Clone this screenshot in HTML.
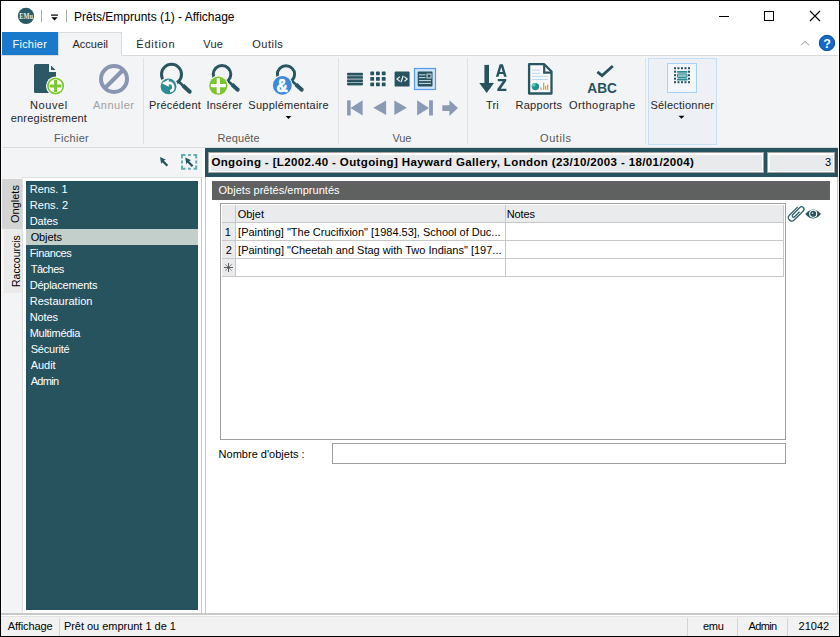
<!DOCTYPE html>
<html><head><meta charset="utf-8"><style>
html,body{margin:0;padding:0;}
body{width:840px;height:637px;position:relative;overflow:hidden;background:#fff;font-family:"Liberation Sans", sans-serif;}
.a{position:absolute;box-sizing:border-box;}
.t{position:absolute;white-space:pre;transform-origin:0 0;}
svg{position:absolute;overflow:visible;}
</style></head><body>
<!-- frame -->
<div class="a" style="left:0;top:0;width:840px;height:637px;border:1px solid #000;"></div>
<!-- title bar -->
<svg style="left:0;top:0" width="840" height="32">
 <circle cx="26" cy="15.9" r="8.1" fill="#2a5a66"/>
 <text x="19.3" y="18.5" font-family="Liberation Serif" font-size="7.2" font-weight="700" fill="#e8eeef" textLength="13.6" lengthAdjust="spacingAndGlyphs">EMu</text>
 <rect x="41" y="10" width="1" height="12" fill="#a8a8a8"/>
 <rect x="51" y="14.5" width="7" height="1.2" fill="#000"/>
 <path d="M51.3 17.2 L57.7 17.2 L54.5 20.6 Z" fill="#000"/>
 <rect x="66" y="10" width="1" height="12" fill="#a8a8a8"/>
 <rect x="719" y="16" width="10" height="1" fill="#000"/>
 <rect x="764.5" y="11.5" width="9" height="9" fill="none" stroke="#000" stroke-width="1"/>
 <path d="M810 11 L820 21 M820 11 L810 21" stroke="#000" stroke-width="1.1"/>
</svg>
<!-- tabs row -->
<div class="a" style="left:1px;top:55px;width:838px;height:1px;background:#dadbdc;"></div>
<div class="a" style="left:2px;top:32px;width:56px;height:23px;background:#1979ca;"></div>
<div class="a" style="left:58px;top:32px;width:64px;height:24px;background:#f3f4f6;border:1px solid #dadbdc;border-bottom:none;"></div>
<svg style="left:0;top:32px" width="840" height="24">
 <path d="M801 13.3 L805 9.3 L809 13.3" stroke="#8c8c8c" stroke-width="1" fill="none"/>
 <circle cx="827" cy="11" r="7.7" fill="#1469c9" stroke="#0b4f9e" stroke-width="1"/>
 <text x="827" y="15.6" font-family="Liberation Sans" font-size="12.5" font-weight="700" fill="#fff" text-anchor="middle">?</text>
</svg>
<!-- ribbon body -->
<div class="a" style="left:1px;top:56px;width:838px;height:91px;background:#f3f4f6;"></div>
<div class="a" style="left:1px;top:147px;width:838px;height:1px;background:#dadbdc;"></div>
<div class="a" style="left:143px;top:58px;width:1px;height:86px;background:#e1e2e4;"></div>
<div class="a" style="left:338px;top:58px;width:1px;height:86px;background:#e1e2e4;"></div>
<div class="a" style="left:467px;top:58px;width:1px;height:86px;background:#e1e2e4;"></div>
<div class="a" style="left:645px;top:58px;width:1px;height:86px;background:#e1e2e4;"></div>
<div class="a" style="left:648px;top:58px;width:69px;height:87px;background:#edf1f6;border:1px solid #c6dff5;"></div>
<div class="a" style="left:667px;top:63px;width:30px;height:30px;background:#f3f6fa;border:1px solid #a9d1f3;"></div>
<!-- left panel -->
<div class="a" style="left:1px;top:148px;width:201px;height:465px;background:#f3f4f6;"></div>
<div class="a" style="left:202px;top:148px;width:3px;height:465px;background:#fff;"></div>
<div class="a" style="left:2px;top:179px;width:20px;height:50px;background:#d4d4d4;"></div>
<div class="a" style="left:4px;top:229px;width:18px;height:64px;background:#ebebeb;"></div>
<div class="a" style="left:22px;top:177px;width:180px;height:437px;background:#fff;border:1px solid #e0e0e0;border-right-color:#c8c8c8;"></div>
<div class="a" style="left:26px;top:181px;width:172px;height:429px;background:#27535f;"></div>
<div class="a" style="left:26px;top:229px;width:172px;height:16px;background:#c3cfcb;"></div>
<div class="a" style="left:1px;top:56px;width:1px;height:557px;background:#fbfbfb;"></div>
<div class="a" style="left:838px;top:55px;width:1px;height:558px;background:#fbfbfb;"></div>
<!-- content -->
<div class="a" style="left:205px;top:177px;width:1px;height:437px;background:#c8c8c8;"></div>
<div class="a" style="left:837px;top:148px;width:1px;height:466px;background:#c8c8c8;"></div>
<div class="a" style="left:205px;top:148px;width:633px;height:29px;background:#27535f;"></div>
<div class="a" style="left:208px;top:152px;width:556px;height:21px;background:#e9eaeb;border:1px solid #a8a2a2;box-shadow:inset 2px 2px 0 #fff, inset -1px -1px 0 #fff;"></div>
<div class="a" style="left:767px;top:152px;width:68px;height:21px;background:#e9eaeb;border:1px solid #a8a2a2;box-shadow:inset 2px 2px 0 #fff, inset -1px -1px 0 #fff;"></div>
<div class="a" style="left:212px;top:181px;width:618px;height:19px;background:#5f6160;"></div>
<!-- grid -->
<div class="a" style="left:220px;top:203px;width:566px;height:237px;background:#fff;border:1px solid #a0a0a0;"></div>
<div class="a" style="left:222px;top:205px;width:561px;height:17px;background:#eaebec;"></div>
<div class="a" style="left:222px;top:222px;width:13px;height:54px;background:#eaebec;"></div>
<div class="a" style="left:222px;top:222px;width:562px;height:1px;background:#c8c8c8;"></div>
<div class="a" style="left:222px;top:240px;width:562px;height:1px;background:#c8c8c8;"></div>
<div class="a" style="left:222px;top:258px;width:562px;height:1px;background:#c8c8c8;"></div>
<div class="a" style="left:222px;top:276px;width:562px;height:1px;background:#c8c8c8;"></div>
<div class="a" style="left:235px;top:205px;width:1px;height:72px;background:#c8c8c8;"></div>
<div class="a" style="left:505px;top:205px;width:1px;height:72px;background:#c8c8c8;"></div>
<div class="a" style="left:783px;top:205px;width:1px;height:72px;background:#c8c8c8;"></div>
<svg style="left:221px;top:258px" width="14" height="18">
 <path d="M4.3 6.3 L10.7 12.7 M10.7 6.3 L4.3 12.7" stroke="#7a7a7a" stroke-width="0.9"/><path d="M7.5 5 V14 M3 9.5 H12" stroke="#5a5a5a" stroke-width="1"/>
</svg>
<div class="a" style="left:332px;top:443px;width:454px;height:21px;background:#fff;border:1px solid #a0a0a0;"></div>
<!-- status bar -->
<div class="a" style="left:1px;top:613px;width:838px;height:2px;background:#c8c8c8;"></div>
<div class="a" style="left:1px;top:616px;width:838px;height:20px;background:#f2f2f2;border-top:1px solid #e3e3e3;"></div>
<div class="a" style="left:59px;top:618px;width:1px;height:18px;background:#d5d5d5;"></div>
<div class="a" style="left:687px;top:618px;width:1px;height:18px;background:#d5d5d5;"></div>
<div class="a" style="left:737px;top:618px;width:1px;height:18px;background:#d5d5d5;"></div>
<div class="a" style="left:787px;top:618px;width:1px;height:18px;background:#d5d5d5;"></div>
<div class="a" style="left:0;top:636px;width:840px;height:1px;background:#000;"></div>
<!-- ribbon icons -->
<svg style="left:0;top:0" width="840" height="148">
 <!-- Nouvel enregistrement -->
 <path d="M35.5 64 H49 V72 H56 V91.5 Q56 93 54.5 93 H35.5 Q34 93 34 91.5 V65.5 Q34 64 35.5 64 Z" fill="#2b5864"/>
 <path d="M51 65.5 L51 70 L55.5 70 Z" fill="#2b5864"/>
 <circle cx="55.6" cy="86" r="9.6" fill="#fff"/>
 <circle cx="55.6" cy="86" r="7.7" fill="#fff" stroke="#7dc832" stroke-width="1.7"/>
 <path d="M49.6 86 H61.6 M55.6 80 V92" stroke="#7dc832" stroke-width="3"/>
 <!-- Annuler -->
 <circle cx="114" cy="79" r="13" fill="none" stroke="#8896b3" stroke-width="4"/>
 <path d="M123.5 69.5 L104.5 88.5" stroke="#8896b3" stroke-width="4"/>
 <!-- Precedent -->
 <circle cx="171.5" cy="74.3" r="10" fill="none" stroke="#2a5560" stroke-width="3"/>
 <path d="M178 81 L191 93" stroke="#2a5560" stroke-width="2.6"/>
 <path d="M183 85.5 L190.5 92.5" stroke="#2a5560" stroke-width="4"/>
 <circle cx="168.5" cy="86.4" r="9.3" fill="#f3f4f6"/>
 <circle cx="168.5" cy="86.4" r="7.9" fill="#2b8c95"/>
 <path d="M161.8 83.2 L168.7 79.4 L168.8 81.6 A5.6 5.6 0 0 1 170.4 92.6 L169.7 89.9 A2.7 2.7 0 0 0 168.8 84.4 L168.8 86.8 Z" fill="#fff"/>
 <!-- Inserer -->
 <circle cx="222" cy="74.3" r="8.8" fill="none" stroke="#2a5560" stroke-width="3"/>
 <path d="M227.5 80.5 L239 91" stroke="#2a5560" stroke-width="2.6"/>
 <path d="M232 84.5 L238.5 90.5" stroke="#2a5560" stroke-width="4"/>
 <circle cx="218.3" cy="85.7" r="10.2" fill="#f3f4f6"/>
 <circle cx="218.3" cy="85.7" r="9.1" fill="#7dc530"/>
 <path d="M210.8 85.7 H225.8 M218.3 78.2 V93.2" stroke="#fff" stroke-width="3.2"/>
 <!-- Supplementaire -->
 <circle cx="286" cy="74.3" r="8.6" fill="none" stroke="#2a5560" stroke-width="3"/>
 <path d="M291.5 80.5 L303 91" stroke="#2a5560" stroke-width="2.6"/>
 <path d="M296 84.5 L302.5 90.5" stroke="#2a5560" stroke-width="4"/>
 <circle cx="282.3" cy="85.4" r="10.5" fill="#f3f4f6"/>
 <circle cx="282.3" cy="85.4" r="9.4" fill="#3d88db"/>
 <text x="276.6" y="91.6" font-family="Liberation Sans" font-size="18" font-weight="700" fill="#fff" stroke="#fff" stroke-width="0.7" textLength="11.2" lengthAdjust="spacingAndGlyphs">&amp;</text>
 <!-- Vue: list -->
 <rect x="347" y="72.5" width="16" height="13" rx="1" fill="#9fb0b5"/>
 <rect x="347" y="73" width="16" height="2.2" rx="1" fill="#27535f"/>
 <rect x="347" y="76.3" width="16" height="2.2" rx="1" fill="#27535f"/>
 <rect x="347" y="79.8" width="16" height="2.2" rx="1" fill="#27535f"/>
 <rect x="347" y="83" width="16" height="2.2" rx="1" fill="#27535f"/>
 <!-- grid -->
 <g fill="#27535f">
  <rect x="370.3" y="71.4" width="3.8" height="3.8" rx="0.6"/><rect x="376" y="71.4" width="3.8" height="3.8" rx="0.6"/><rect x="381.8" y="71.4" width="3.8" height="3.8" rx="0.6"/>
  <rect x="370.3" y="77" width="3.8" height="3.8" rx="0.6"/><rect x="376" y="77" width="3.8" height="3.8" rx="0.6"/><rect x="381.8" y="77" width="3.8" height="3.8" rx="0.6"/>
  <rect x="370.3" y="82.5" width="3.8" height="3.8" rx="0.6"/><rect x="376" y="82.5" width="3.8" height="3.8" rx="0.6"/><rect x="381.8" y="82.5" width="3.8" height="3.8" rx="0.6"/>
 </g>
 <!-- code -->
 <rect x="394.6" y="71.4" width="15" height="15.2" rx="1.2" fill="#27535f"/>
 <path d="M399.8 76.6 L397 79 L399.8 81.4 M404.4 76.6 L407.2 79 L404.4 81.4 M403.2 75.8 L401 82.2" stroke="#f0f4f5" stroke-width="1.2" fill="none"/>
 <!-- selected form -->
 <rect x="414.5" y="68.5" width="21" height="21" fill="#cde4f9" stroke="#5a9de6" stroke-width="1.2"/>
 <rect x="417.7" y="71.6" width="14.8" height="14.9" rx="1" fill="#27535f"/>
 <path d="M419 74.8 H425.5 M419 77.6 H425.5 M419 80.6 H431 M419 83.4 H431" stroke="#cfe0ea" stroke-width="1"/>
 <rect x="427" y="74" width="4" height="4" fill="none" stroke="#cfe0ea" stroke-width="1"/>
 <!-- nav -->
 <g fill="#8a9ab5">
  <rect x="347.1" y="100.3" width="3.6" height="15.2"/>
  <path d="M350.5 107.9 L362.6 100.3 V115.5 Z"/>
  <path d="M373.3 107.8 L386.1 100.6 V115 Z"/>
  <path d="M407 107.8 L394.3 100.6 V115 Z"/>
  <path d="M429 107.9 L417.1 100.3 V115.5 Z"/>
  <rect x="429.1" y="100.3" width="3.8" height="15.2"/>
  <path d="M442.3 105.3 H449.4 V100.3 L458 108 L449.4 116 V111 H442.3 Z"/>
 </g>
 <!-- Tri -->
 <rect x="484.4" y="64.9" width="4.6" height="19" fill="#27535f"/>
 <path d="M479.3 83 H494 L486.7 93 Z" fill="#27535f"/>
  <path d="M495.9 76.8 L499.7 64.3 H502.9 L506.7 76.8 H504.1 L503.3 74.1 H499.3 L498.5 76.8 Z M499.9 71.9 H502.7 L501.3 66.9 Z" fill="#27535f" fill-rule="evenodd"/>
 <path d="M497.8 79 H506.2 V81.1 L500.7 88.8 H506.4 V91 H497.3 V88.9 L502.8 81.2 H497.8 Z" fill="#27535f"/>
 <!-- Rapports -->
 <path d="M529.1 64.2 H544.2 L551.5 71.5 V93.5 H529.1 Z" fill="#f6f8fa" stroke="#2a5560" stroke-width="2.3" stroke-linejoin="round"/>
 <path d="M544.2 64.2 V72.7 H551.5" fill="none" stroke="#2a5560" stroke-width="2.2"/>
 <path d="M532 70.2 H540 M532 73.3 H540 M532 76.4 H548 M532 79.5 H548" stroke="#b9d9f2" stroke-width="1"/>
 <circle cx="535.4" cy="86.6" r="3.7" fill="#2b8c94"/>
 <path d="M535.4 86.6 V82.9 A3.7 3.7 0 0 0 531.7 86.6 Z" fill="#45d6b0"/>
 <g fill="#e8a030"><rect x="540.5" y="87.5" width="1.3" height="2.3"/><rect x="543" y="82.7" width="1.3" height="7.1"/><rect x="545" y="86" width="1.3" height="3.8"/><rect x="547" y="84.5" width="1.3" height="5.3"/></g>
 <!-- Orthographe -->
 <path d="M597.4 71.8 L602.1 75.6 L612.8 66" fill="none" stroke="#27535f" stroke-width="2.8"/>
 <text x="602.1" y="92.5" font-family="Liberation Sans" font-size="14" font-weight="700" fill="#27535f" text-anchor="middle" textLength="29.6" lengthAdjust="spacingAndGlyphs">ABC</text>
 <!-- Selectionner -->
 <g fill="#2a5560">
  <rect x="674" y="67.2" width="2" height="2"/><rect x="677.5" y="67.2" width="2" height="2"/><rect x="681" y="67.2" width="2" height="2"/><rect x="684.5" y="67.2" width="2" height="2"/><rect x="688" y="67.2" width="2" height="2"/>
  <rect x="674" y="81.2" width="2" height="2"/><rect x="677.5" y="81.2" width="2" height="2"/><rect x="681" y="81.2" width="2" height="2"/><rect x="684.5" y="81.2" width="2" height="2"/><rect x="688" y="81.2" width="2" height="2"/>
  <rect x="674" y="70.7" width="2" height="2"/><rect x="674" y="74.2" width="2" height="2"/><rect x="674" y="77.7" width="2" height="2"/>
  <rect x="688" y="70.7" width="2" height="2"/><rect x="688" y="74.2" width="2" height="2"/><rect x="688" y="77.7" width="2" height="2"/>
 </g>
 <rect x="677" y="71" width="10.5" height="1.8" rx="0.6" fill="#2b8c94"/>
 <rect x="677.5" y="73.9" width="9.5" height="3.6" rx="0.6" fill="#8ec3c4" stroke="#2b8c94" stroke-width="1"/>
 <rect x="677" y="78.6" width="10.5" height="1.8" rx="0.6" fill="#2b8c94"/>
 <!-- dropdown arrows -->
 <path d="M285.6 116 H291.4 L288.5 119 Z" fill="#000"/>
 <path d="M678.5 115.7 H684.5 L681.5 118.7 Z" fill="#000"/>
</svg>
<!-- left panel icons -->
<svg style="left:0;top:148px" width="210" height="30">
 <path d="M160 9 L166 11.8 L163.8 12.6 L168.2 17 L166.6 18.6 L162.2 14.2 L161.2 16 Z" fill="#27535f"/>
 <path d="M182 10.5 V7.1 H185.5 M188 7.1 H190.8 M193.5 7.1 H196.2 V10.5 M196.2 12.5 V15.5 M196.2 17.5 V20.7 H193.5 M190.8 20.7 H188 M185.5 20.7 H182 V17.5 M182 15.5 V12.5" fill="none" stroke="#62adae" stroke-width="2"/>
 <path d="M185.2 9.4 L191.2 12.2 L189 13 L193.4 17.4 L191.8 19 L187.4 14.6 L186.4 16.4 Z" fill="#27535f"/>
</svg>
<!-- paperclip & eye -->
<svg style="left:784px;top:202px" width="42" height="24">
 <path transform="translate(7.8 15.6) rotate(45)" d="M-3.4 -11.8 L-3.4 0 A3.4 3.4 0 0 0 3.4 0 L3.4 -12.8 A2.4 2.4 0 0 0 -1.4 -12.8 L-1.4 -2.6 A1.4 1.4 0 0 0 1.4 -2.6 L1.4 -9.6" fill="none" stroke="#2a5f6a" stroke-width="1.25" stroke-linecap="butt"/>
 <path d="M21.3 12 Q29 3 37 12 Q29 21 21.3 12 Z" fill="#2a5560"/>
 <circle cx="29.2" cy="11.8" r="3.5" fill="none" stroke="#fff" stroke-width="1.1"/>
 <circle cx="29.2" cy="11.8" r="2.6" fill="#2a5560"/>
 <path d="M29.2 11.8 V10.2 A1.6 1.6 0 0 0 27.6 11.8 Z" fill="#fff"/>
</svg>
<!-- vertical tabs text -->
<span class="t" style="left:10.3px;top:223px;font-size:11px;line-height:11px;color:#000;transform:rotate(-90deg);">Onglets</span>
<span class="t" style="left:10.9px;top:287px;font-size:11px;line-height:11px;color:#000;transform:rotate(-90deg) scaleX(0.952);">Raccourcis</span>

<span id="t0" class="t" style="left:74.00px;top:10.84px;font-size:12px;line-height:12px;font-weight:400;color:#000;letter-spacing:0.000px;">Prêts/Emprunts (1) - Affichage</span>
<span id="t1" class="t" style="left:12.60px;top:38.69px;font-size:11px;line-height:11px;font-weight:400;color:#fff;letter-spacing:0.200px;">Fichier</span>
<span id="t2" class="t" style="left:72.40px;top:38.69px;font-size:11px;line-height:11px;font-weight:400;color:#262626;letter-spacing:0.033px;">Accueil</span>
<span id="t3" class="t" style="left:136.30px;top:38.69px;font-size:11px;line-height:11px;font-weight:400;color:#262626;letter-spacing:0.783px;">Édition</span>
<span id="t4" class="t" style="left:203.30px;top:38.69px;font-size:11px;line-height:11px;font-weight:400;color:#262626;letter-spacing:0.200px;">Vue</span>
<span id="t5" class="t" style="left:252.30px;top:38.69px;font-size:11px;line-height:11px;font-weight:400;color:#262626;letter-spacing:0.480px;">Outils</span>
<span id="t6" class="t" style="left:30.00px;top:99.69px;font-size:11px;line-height:11px;font-weight:400;color:#262626;letter-spacing:0.600px;">Nouvel</span>
<span id="t7" class="t" style="left:10.70px;top:112.69px;font-size:11px;line-height:11px;font-weight:400;color:#262626;letter-spacing:0.215px;">enregistrement</span>
<span id="t8" class="t" style="left:93.00px;top:99.69px;font-size:11px;line-height:11px;font-weight:400;color:#a0a0a0;letter-spacing:0.500px;">Annuler</span>
<span id="t9" class="t" style="left:149.00px;top:99.69px;font-size:11px;line-height:11px;font-weight:400;color:#262626;letter-spacing:0.212px;">Précédent</span>
<span id="t10" class="t" style="left:206.40px;top:99.69px;font-size:11px;line-height:11px;font-weight:400;color:#262626;letter-spacing:0.267px;">Insérer</span>
<span id="t11" class="t" style="left:248.30px;top:99.69px;font-size:11px;line-height:11px;font-weight:400;color:#262626;letter-spacing:0.254px;">Supplémentaire</span>
<span id="t12" class="t" style="left:486.00px;top:99.69px;font-size:11px;line-height:11px;font-weight:400;color:#262626;letter-spacing:0.100px;">Tri</span>
<span id="t13" class="t" style="left:515.40px;top:99.69px;font-size:11px;line-height:11px;font-weight:400;color:#262626;letter-spacing:0.300px;">Rapports</span>
<span id="t14" class="t" style="left:569.00px;top:99.69px;font-size:11px;line-height:11px;font-weight:400;color:#262626;letter-spacing:0.430px;">Orthographe</span>
<span id="t15" class="t" style="left:650.40px;top:99.69px;font-size:11px;line-height:11px;font-weight:400;color:#262626;letter-spacing:0.227px;">Sélectionner</span>
<span id="t16" class="t" style="left:54.00px;top:132.69px;font-size:11px;line-height:11px;font-weight:400;color:#595959;letter-spacing:0.292px;">Fichier</span>
<span id="t17" class="t" style="left:217.60px;top:132.69px;font-size:11px;line-height:11px;font-weight:400;color:#595959;letter-spacing:0.067px;">Requête</span>
<span id="t18" class="t" style="left:392.50px;top:132.69px;font-size:11px;line-height:11px;font-weight:400;color:#595959;letter-spacing:-0.100px;">Vue</span>
<span id="t19" class="t" style="left:540.00px;top:132.69px;font-size:11px;line-height:11px;font-weight:400;color:#595959;letter-spacing:0.600px;">Outils</span>
<span id="t20" class="t" style="left:29.70px;top:183.69px;font-size:11px;line-height:11px;font-weight:400;color:#fff;letter-spacing:0.000px;">Rens. 1</span>
<span id="t21" class="t" style="left:29.70px;top:199.69px;font-size:11px;line-height:11px;font-weight:400;color:#fff;letter-spacing:0.067px;">Rens. 2</span>
<span id="t22" class="t" style="left:29.70px;top:215.69px;font-size:11px;line-height:11px;font-weight:400;color:#fff;letter-spacing:-0.100px;">Dates</span>
<span id="t23" class="t" style="left:30.70px;top:231.69px;font-size:11px;line-height:11px;font-weight:400;color:#000;letter-spacing:-0.120px;">Objets</span>
<span id="t24" class="t" style="left:29.70px;top:247.69px;font-size:11px;line-height:11px;font-weight:400;color:#fff;letter-spacing:-0.357px;">Finances</span>
<span id="t25" class="t" style="left:30.70px;top:263.69px;font-size:11px;line-height:11px;font-weight:400;color:#fff;letter-spacing:-0.480px;">Tâches</span>
<span id="t26" class="t" style="left:29.70px;top:279.69px;font-size:11px;line-height:11px;font-weight:400;color:#fff;letter-spacing:-0.236px;">Déplacements</span>
<span id="t27" class="t" style="left:29.70px;top:295.69px;font-size:11px;line-height:11px;font-weight:400;color:#fff;letter-spacing:0.036px;">Restauration</span>
<span id="t28" class="t" style="left:29.70px;top:311.69px;font-size:11px;line-height:11px;font-weight:400;color:#fff;letter-spacing:-0.100px;">Notes</span>
<span id="t29" class="t" style="left:29.70px;top:327.69px;font-size:11px;line-height:11px;font-weight:400;color:#fff;letter-spacing:-0.278px;">Multimédia</span>
<span id="t30" class="t" style="left:30.70px;top:343.69px;font-size:11px;line-height:11px;font-weight:400;color:#fff;letter-spacing:-0.200px;">Sécurité</span>
<span id="t31" class="t" style="left:30.70px;top:359.69px;font-size:11px;line-height:11px;font-weight:400;color:#fff;letter-spacing:-0.025px;">Audit</span>
<span id="t32" class="t" style="left:30.70px;top:375.69px;font-size:11px;line-height:11px;font-weight:400;color:#fff;letter-spacing:-0.675px;">Admin</span>
<span id="t33" class="t" style="left:211.40px;top:157.27px;font-size:11.5px;line-height:11.5px;font-weight:700;color:#000;letter-spacing:0.378px;">Ongoing - [L2002.40 - Outgoing] Hayward Gallery, London (23/10/2003 - 18/01/2004)</span>
<span id="t34" class="t" style="left:825.00px;top:156.69px;font-size:11px;line-height:11px;font-weight:400;color:#000;">3</span>
<span id="t35" class="t" style="left:218.50px;top:184.69px;font-size:11px;line-height:11px;font-weight:400;color:#fff;letter-spacing:0.027px;">Objets prêtés/empruntés</span>
<span id="t36" class="t" style="left:237.70px;top:208.69px;font-size:11px;line-height:11px;font-weight:400;color:#000;letter-spacing:0.000px;">Objet</span>
<span id="t37" class="t" style="left:506.70px;top:208.69px;font-size:11px;line-height:11px;font-weight:400;color:#000;letter-spacing:-0.100px;">Notes</span>
<span id="t38" class="t" style="left:224.70px;top:226.69px;font-size:11px;line-height:11px;font-weight:400;color:#000;">1</span>
<span id="t39" class="t" style="left:225.70px;top:244.69px;font-size:11px;line-height:11px;font-weight:400;color:#000;">2</span>
<span id="t40" class="t" style="left:238.10px;top:226.69px;font-size:11px;line-height:11px;font-weight:400;color:#000;letter-spacing:-0.007px;">[Painting] "The Crucifixion" [1984.53], School of Duc...</span>
<span id="t41" class="t" style="left:238.10px;top:244.69px;font-size:11px;line-height:11px;font-weight:400;color:#000;letter-spacing:0.004px;">[Painting] "Cheetah and Stag with Two Indians" [197...</span>
<span id="t42" class="t" style="left:218.60px;top:448.69px;font-size:11px;line-height:11px;font-weight:400;color:#000;letter-spacing:0.013px;">Nombre d'objets :</span>
<span id="t43" class="t" style="left:7.80px;top:620.69px;font-size:11px;line-height:11px;font-weight:400;color:#000;letter-spacing:-0.112px;">Affichage</span>
<span id="t44" class="t" style="left:63.90px;top:620.69px;font-size:11px;line-height:11px;font-weight:400;color:#000;letter-spacing:-0.024px;">Prêt ou emprunt 1 de 1</span>
<span id="t45" class="t" style="left:702.90px;top:620.69px;font-size:11px;line-height:11px;font-weight:400;color:#000;letter-spacing:-0.250px;">emu</span>
<span id="t46" class="t" style="left:748.60px;top:620.69px;font-size:11px;line-height:11px;font-weight:400;color:#000;letter-spacing:-0.650px;">Admin</span>
<span id="t47" class="t" style="left:798.60px;top:620.69px;font-size:11px;line-height:11px;font-weight:400;color:#000;letter-spacing:0.000px;">21042</span>
</body></html>
